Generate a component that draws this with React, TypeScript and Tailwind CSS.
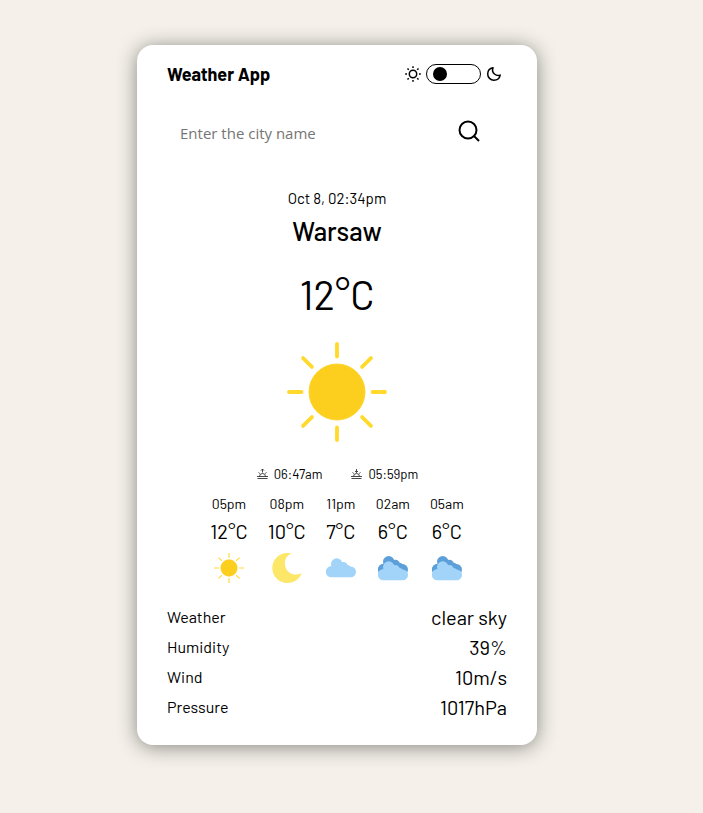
import { useState } from "react";

type IconProps = { className?: string };
type Sky = "sun" | "moon" | "cloud" | "clouds";

const ANGLES = [0, 45, 90, 135, 180, 225, 270, 315];

function SunArt({ className }: IconProps) {
  return (
    <svg viewBox="0 0 100 100" className={className} aria-hidden="true">
      <circle cx="50" cy="50" r="28" fill="#fccf1f" stroke="#fed42c" strokeWidth="1" />
      {ANGLES.map((a) => (
        <path key={a} d="M50 2v12.500" stroke="#ffda2d" strokeWidth="3.800" strokeLinecap="round" transform={`rotate(${a} 50 50)`} />
      ))}
    </svg>
  );
}

function MoonArt({ className }: IconProps) {
  return (
    <svg viewBox="0 0 30 30" className={className} aria-hidden="true">
      <path d="M19.500 0.300C14.500 2.500 12 7.500 13.200 13 14.800 20.500 22.500 23.500 29.700 20.200 27.500 26 22 30 15.300 30 7 30 0.300 23.300 0.300 15S7 0 15 0c1.600 0 3.100 0 4.500 0.300Z" fill="#fde768" />
    </svg>
  );
}

function CloudShape({ top, fill }: { top: number; fill: string }) {
  return (
    <g fill={fill} transform={`translate(0 ${top})`}>
      <circle cx="10.700" cy="5.700" r="5.700" />
      <circle cx="17.300" cy="8.500" r="4.700" />
      <circle cx="21.200" cy="10.500" r="3.800" />
      <circle cx="5.500" cy="13.300" r="5.500" />
      <rect x="0" y="8.100" width="30" height="10.900" rx="5.400" />
    </g>
  );
}

function CloudArt({ className }: IconProps) {
  return (
    <svg viewBox="0 0 30 30" className={className} aria-hidden="true">
      <CloudShape top={5.3} fill="#a2d3f8" />
    </svg>
  );
}

function CloudsArt({ className }: IconProps) {
  return (
    <svg viewBox="0 0 30 30" className={className} aria-hidden="true">
      <CloudShape top={3} fill="#5d9fd8" />
      <CloudShape top={8.3} fill="#a2d3f8" />
    </svg>
  );
}

const ART = { sun: SunArt, moon: MoonArt, cloud: CloudArt, clouds: CloudsArt };

function SunOutline() {
  return (
    <svg viewBox="0 0 16 16" className="size-4" fill="none" stroke="#000" strokeWidth="1.500" aria-hidden="true">
      <circle cx="8" cy="8" r="3.700" />
      {ANGLES.map((a) => (
        <path key={a} d="M8 0.200v1.800" transform={`rotate(${a} 8 8)`} />
      ))}
    </svg>
  );
}

function MoonOutline() {
  return (
    <svg viewBox="0 0 16 16" className="size-4" fill="none" stroke="#000" strokeWidth="1.500" strokeLinejoin="round" aria-hidden="true">
      <path d="M7 1.800C3.800 2.400 1.700 5 1.700 8a6.200 6.200 0 0 0 6.200 6.200c3.200 0 5.700-2.100 6.300-5.100C10.500 10.300 5 7.500 7 1.800Z" />
    </svg>
  );
}

function SearchIcon() {
  return (
    <svg viewBox="0 0 24 24" className="size-6" fill="none" stroke="#000" strokeWidth="2" aria-hidden="true">
      <circle cx="11" cy="11" r="8.500" />
      <path d="M17 17l5 5" />
    </svg>
  );
}

function HorizonIcon({ down }: { down?: boolean }) {
  return (
    <svg viewBox="0 0 12 12" className="size-3" fill="none" stroke="#333" strokeWidth="0.900" aria-hidden="true">
      <path d="M1.500 10.500h10M1 8.500h11M3.500 8.500a3 3 0 0 1 6 0M2.500 4.500l1.300 1M10.500 4.500l-1.300 1M6.500 1v3.500" />
      <path d={down ? "M5 3l1.500 1.500L8 3" : "M5 2.500L6.500 1 8 2.500"} />
    </svg>
  );
}

const HOURS: { time: string; temp: string; sky: Sky }[] = [
  { time: "05pm", temp: "12°C", sky: "sun" },
  { time: "08pm", temp: "10°C", sky: "moon" },
  { time: "11pm", temp: "7°C", sky: "cloud" },
  { time: "02am", temp: "6°C", sky: "clouds" },
  { time: "05am", temp: "6°C", sky: "clouds" },
];

const DETAILS = [
  ["Weather", "clear sky"],
  ["Humidity", "39%"],
  ["Wind", "10m/s"],
  ["Pressure", "1017hPa"],
];

export default function App() {
  const [dark, setDark] = useState(false);
  const [city, setCity] = useState("");

  return (
    <div className="min-h-screen bg-[#f5f1ea] pt-[45px] pr-[29px] pb-[68px] font-['Barlow','Roboto',sans-serif] text-black">
      <main className="mx-auto max-w-[400px] rounded-2xl bg-white px-[30px] pt-[17px] pb-[23px] shadow-[0_2px_20px_rgba(0,0,0,0.45)]">
        <header className="flex items-center justify-between">
          <h1 className="text-[18px] leading-6 font-bold">Weather App</h1>
          <label className="flex cursor-pointer items-center gap-[5px] pr-[5px]">
            <SunOutline />
            <input type="checkbox" role="switch" aria-label="Dark mode" checked={dark} onChange={(e) => setDark(e.target.checked)} className="peer sr-only" />
            <span className="flex h-5 w-[55px] items-center rounded-full border border-black px-[6px] peer-checked:justify-end">
              <span className="size-[14px] rounded-full bg-black" />
            </span>
            <MoonOutline />
          </label>
        </header>

        <form className="mt-[21px] flex h-12 items-center pr-[26px] pl-[13px]" onSubmit={(e) => e.preventDefault()}>
          <input
            type="text"
            aria-label="City name"
            placeholder="Enter the city name"
            value={city}
            onChange={(e) => setCity(e.target.value)}
            className="min-w-0 flex-1 pt-[3px] font-['Open_Sans',sans-serif] text-[15px] leading-6 outline-none placeholder:text-[#757575]"
          />
          <button type="submit" aria-label="Search" className="cursor-pointer">
            <SearchIcon />
          </button>
        </form>

        <section className="mt-[33px] flex flex-col items-center">
          <p className="text-[15px] leading-5">Oct 8, 02:34pm</p>
          <h2 className="mt-[7px] text-[26px] leading-8 font-medium">Warsaw</h2>
          <p className="mt-[23px] text-[40px] leading-12">12°C</p>
          <SunArt className="mt-6 size-[100px]" />
          <div className="mt-[22px] flex gap-[28px] text-[13px] leading-5">
            <p className="flex items-center gap-[6px]">
              <HorizonIcon />
              06:47am
            </p>
            <p className="flex items-center gap-[6px]">
              <HorizonIcon down />
              05:59pm
            </p>
          </div>
        </section>

        <ul className="mt-[10px] flex justify-center gap-5">
          {HOURS.map(({ time, temp, sky }) => {
            const Art = ART[sky];
            return (
              <li key={time} className="flex flex-col items-center">
                <span className="text-[14px] leading-5">{time}</span>
                <span className="mt-[3px] text-[20px] leading-7">{temp}</span>
                <Art className="mt-2 size-[30px]" />
              </li>
            );
          })}
        </ul>

        <dl className="mt-[19px]">
          {DETAILS.map(([name, value]) => (
            <div key={name} className="flex h-[30px] items-center justify-between">
              <dt className="text-[16px] leading-6">{name}</dt>
              <dd className="text-[20px] leading-6">{value}</dd>
            </div>
          ))}
        </dl>
      </main>
    </div>
  );
}
